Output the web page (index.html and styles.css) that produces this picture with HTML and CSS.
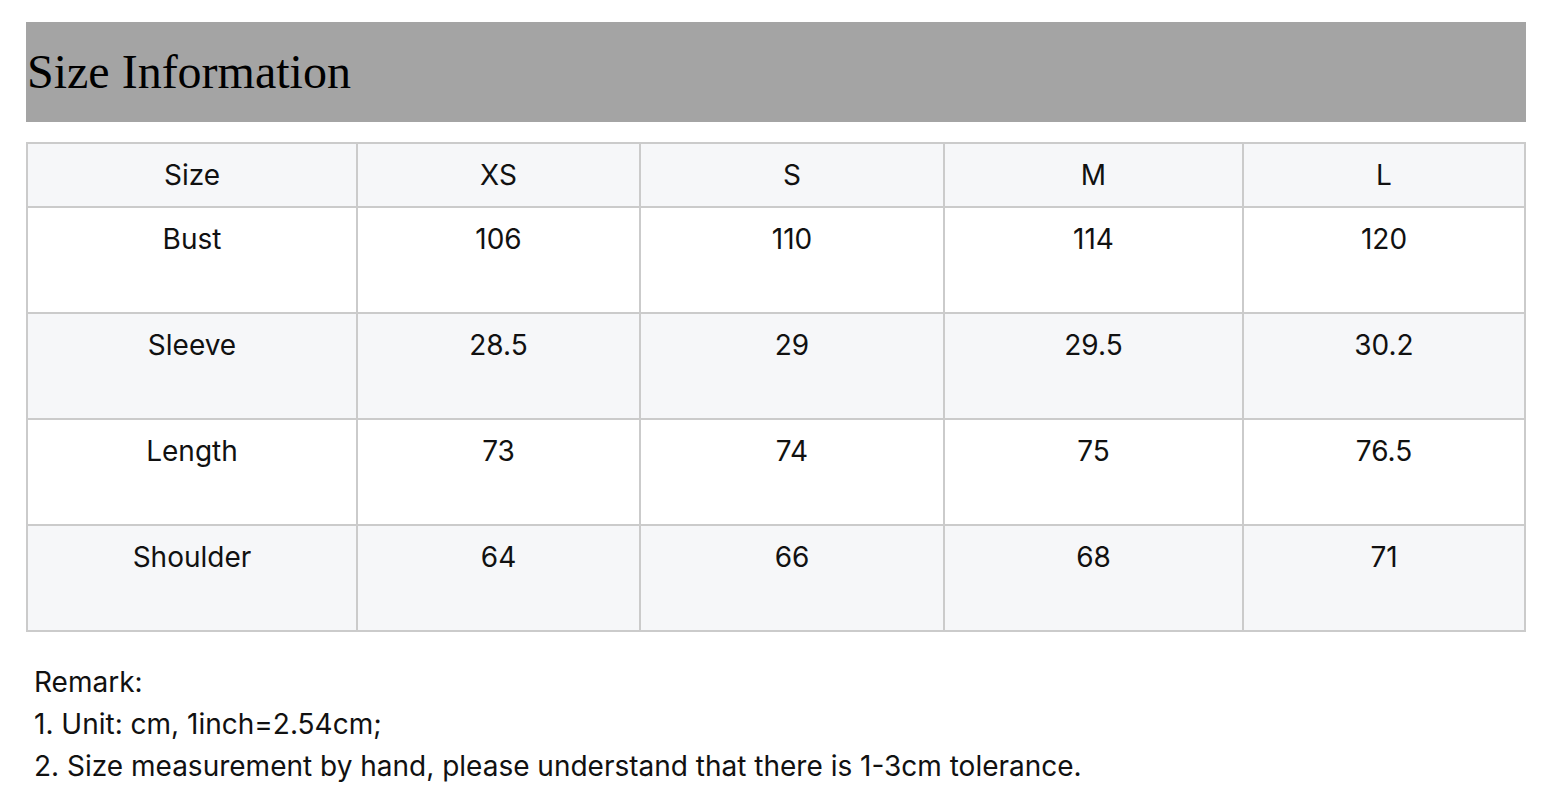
FILE: index.html
```html
<!DOCTYPE html>
<html lang="en">
<head>
<meta charset="utf-8">
<title>Size Information</title>
<link rel="stylesheet" href="styles.css">
</head>
<body>
<div class="page">
  <div class="title-bar"><h2 class="title">Size Information</h2></div>
  <table class="size-table">
    <colgroup>
      <col class="c1"><col class="c2"><col class="c3"><col class="c4"><col class="c5">
    </colgroup>
    <thead>
      <tr><th>Size</th><th>XS</th><th>S</th><th>M</th><th>L</th></tr>
    </thead>
    <tbody>
      <tr><td>Bust</td><td>106</td><td>110</td><td>114</td><td>120</td></tr>
      <tr class="alt"><td>Sleeve</td><td>28.5</td><td>29</td><td>29.5</td><td>30.2</td></tr>
      <tr><td>Length</td><td>73</td><td>74</td><td>75</td><td>76.5</td></tr>
      <tr class="alt"><td>Shoulder</td><td>64</td><td>66</td><td>68</td><td>71</td></tr>
    </tbody>
  </table>
  <div class="remarks">
    <p>Remark:</p>
    <p>1. Unit: cm, 1inch=2.54cm;</p>
    <p>2. Size measurement by hand, please understand that there is 1-3cm tolerance.</p>
  </div>
</div>
</body>
</html>
```

FILE: styles.css
```css
* { box-sizing: border-box; }
html, body { margin: 0; padding: 0; background: #ffffff; }
.page {
  padding: 22px 36px 0 26px;
  width: 1562px;
}
.title-bar {
  background: #a4a4a4;
  height: 100px;
  display: flex;
  align-items: center;
}
.title {
  margin: 0;
  font-family: "Liberation Serif", "Times New Roman", serif;
  font-weight: normal;
  font-size: 48px;
  line-height: 56px;
  color: #000;
  padding-left: 1px;
}
.size-table {
  margin-top: 20px;
  width: 1498px;
  border-collapse: collapse;
  table-layout: fixed;
  font-family: Inter, "Liberation Sans", sans-serif;
  font-size: 28px;
  line-height: 32px;
  color: #111;
  border: 2px solid #cbcbcb;
}
.c1 { width: 330px; }
.c2 { width: 283px; }
.c3 { width: 304px; }
.c4 { width: 299px; }
.c5 { width: 282px; }
.size-table th,
.size-table td {
  border: 2px solid #cbcbcb;
  text-align: center;
  vertical-align: top;
  font-weight: normal;
  padding: 15px 8px;
}
.size-table thead tr { background: #f6f7f9; }
.size-table td { padding-bottom: 57px; }
.size-table tr.alt { background: #f6f7f9; }
.remarks {
  margin-top: 29px;
  padding-left: 8px;
  font-family: Inter, "Liberation Sans", sans-serif;
  font-size: 28px;
  line-height: 42px;
  color: #111;
}
.remarks p { margin: 0; }
```
